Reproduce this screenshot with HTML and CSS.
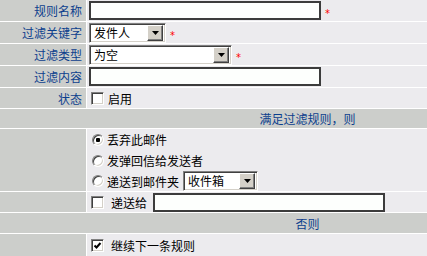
FILE: index.html
```html
<!DOCTYPE html>
<html lang="zh-CN">
<head>
    <meta charset="UTF-8">
    <title>过滤规则</title>
    <link rel="stylesheet" href="styles.css">
</head>
<body>

    <!-- Filter rule form -->
    <div class="rule-form">
        <div class="label">规则名称</div>
        <div class="field">
            <input class="text-input" type="text"><span class="req">*</span>
        </div>

        <div class="label">过滤关键字</div>
        <div class="field">
            <span class="select select-key">
                <span class="select-value">发件人</span>
                <span class="select-btn"><svg width="7" height="4" viewBox="0 0 7 4"><path d="M0 0h7L3.5 4z"/></svg></span>
            </span><span class="req">*</span>
        </div>

        <div class="label">过滤类型</div>
        <div class="field">
            <span class="select select-type">
                <span class="select-value">为空</span>
                <span class="select-btn"><svg width="7" height="4" viewBox="0 0 7 4"><path d="M0 0h7L3.5 4z"/></svg></span>
            </span><span class="req">*</span>
        </div>

        <div class="label">过滤内容</div>
        <div class="field">
            <input class="text-input" type="text">
        </div>

        <div class="label">状态</div>
        <div class="field">
            <span class="check"></span><span class="check-text">启用</span>
        </div>

        <div class="section">满足过滤规则，则</div>

        <div class="label"></div>
        <div class="field options">
            <div class="option"><span class="radio checked"></span>丢弃此邮件</div>
            <div class="option"><span class="radio"></span>发弹回信给发送者</div>
            <div class="option">
                <span class="radio"></span>递送到邮件夹
                <span class="select select-folder">
                    <span class="select-value">收件箱</span>
                    <span class="select-btn"><svg width="7" height="4" viewBox="0 0 7 4"><path d="M0 0h7L3.5 4z"/></svg></span>
                </span>
            </div>
        </div>

        <div class="label"></div>
        <div class="field">
            <span class="check"></span><span class="check-text wide">递送给</span>
            <input class="text-input forward" type="text">
        </div>

        <div class="section">否则</div>

        <div class="label"></div>
        <div class="field">
            <span class="check checked"><svg width="9" height="9" viewBox="0 0 9 9"><path d="M1.5 4.5l2 2 4-4.5" fill="none" stroke="#000" stroke-width="2"/></svg></span><span class="check-text wide">继续下一条规则</span>
        </div>
    </div>

</body>
</html>
```

FILE: styles.css
```css
/* General Styles */
body {
    margin: 0;
    background: #ffffff;
    font-family: "Noto Sans CJK SC", sans-serif;
    font-size: 12px;
    color: #000000;
    overflow: hidden;
}

/* Form grid: white 1px lines between cells */
.rule-form {
    display: grid;
    width: 615px;
    grid-template-columns: 86px 528px;
    grid-template-rows: 21px 21px 21px 21px 20px 19px 62px 20px 20px 22px;
    gap: 1px;
    background: #ffffff;
}

.label {
    display: flex;
    align-items: center;
    justify-content: flex-end;
    padding-right: 4px;
    background: #cccecb;
    color: #0c3f8d;
}

.field {
    display: flex;
    align-items: center;
    padding-left: 2px;
    background: #ecebee;
}

.section {
    grid-column: 1 / -1;
    display: flex;
    align-items: center;
    justify-content: center;
    background: #cccecb;
    color: #0c3f8d;
}

.req {
    color: #ff0000;
    margin-left: 4px;
    padding-top: 5px;
    font-family: "DejaVu Sans", sans-serif;
    font-size: 10px;
}

/* Text inputs */
.text-input {
    box-sizing: border-box;
    width: 232px;
    height: 19px;
    margin: 0;
    padding: 0 2px;
    border: 2px solid #3c3c3c;
    background: #fdfffd;
    font: inherit;
    outline: none;
}

.text-input.forward {
    margin-left: 6px;
}

/* Select boxes */
.select {
    box-sizing: border-box;
    display: inline-flex;
    align-items: center;
    height: 20px;
    border: 1px solid;
    border-color: #808080 #ffffff #ffffff #808080;
    box-shadow: inset 1px 1px #404040, inset -1px -1px #d4d0c8;
    background: #ffffff;
    padding: 2px;
}

.select-value {
    flex: 1;
    padding-left: 2px;
    line-height: 16px;
}

.select-btn {
    box-sizing: border-box;
    display: flex;
    align-items: center;
    justify-content: center;
    width: 16px;
    height: 16px;
    background: #d4d0c8;
    border: 1px solid;
    border-color: #ffffff #404040 #404040 #ffffff;
    box-shadow: inset -1px -1px #808080;
}

.select-key {
    width: 77px;
}

.select-type {
    width: 143px;
}

.select-folder {
    width: 75px;
    margin-left: 4px;
}

/* Checkboxes */
.check {
    box-sizing: border-box;
    display: inline-flex;
    align-items: center;
    justify-content: center;
    width: 13px;
    height: 13px;
    margin-left: 2px;
    border: 1px solid;
    border-color: #808080 #ffffff #ffffff #808080;
    box-shadow: inset 1px 1px #404040, inset -1px -1px #d4d0c8;
    background: #ffffff;
}

.check-text {
    margin-left: 4px;
}

.check-text.wide {
    margin-left: 7px;
}

/* Radio options */
.options {
    flex-direction: column;
    align-items: stretch;
}

.option {
    display: flex;
    align-items: center;
    height: 21px;
}

.option:last-child {
    height: 20px;
}

.radio {
    box-sizing: border-box;
    width: 12px;
    height: 12px;
    margin: 0 3px 0 3px;
    border-radius: 50%;
    border: 1px solid;
    border-color: #808080 #ffffff #ffffff #808080;
    box-shadow: inset 1px 1px #404040, inset -1px -1px #d4d0c8;
    background: #ffffff;
}

.radio.checked {
    background: radial-gradient(circle, #000000 0 2px, #ffffff 2.5px);
}
```
